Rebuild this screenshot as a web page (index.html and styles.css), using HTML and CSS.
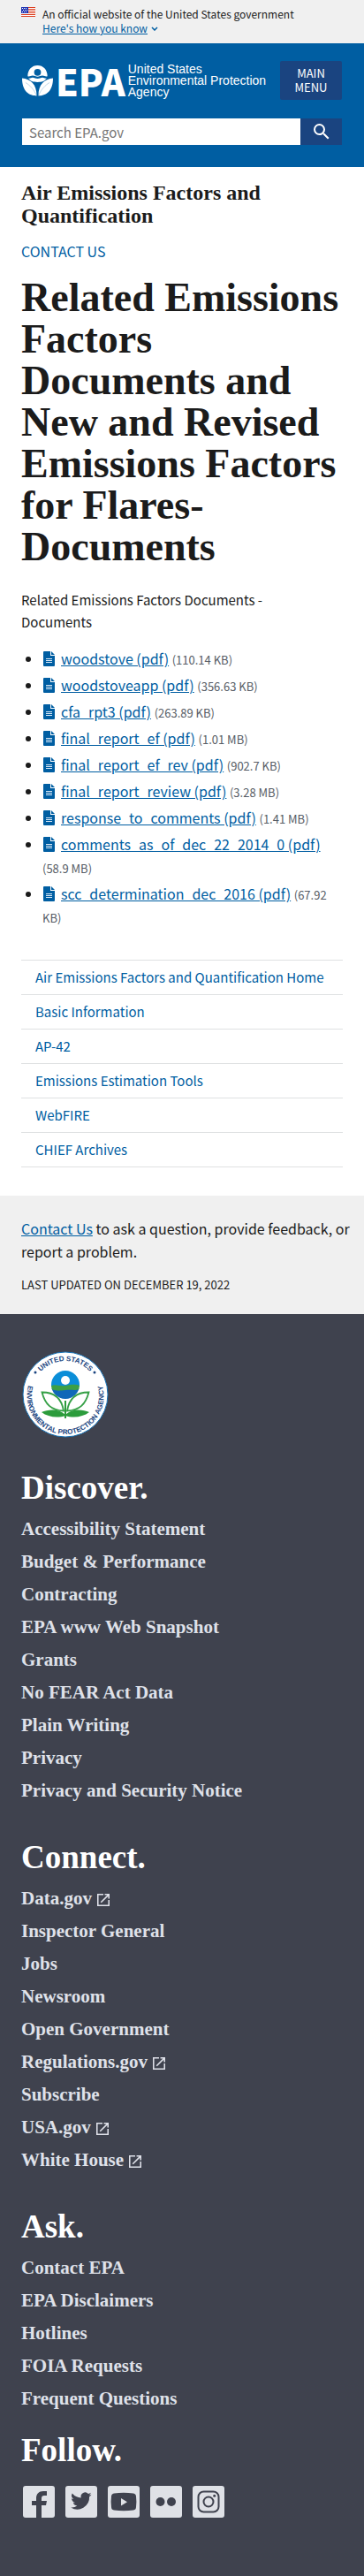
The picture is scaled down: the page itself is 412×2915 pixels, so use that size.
FILE: index.html
```html
<!DOCTYPE html>
<html lang="en">
<head>
<meta charset="utf-8">
<meta name="viewport" content="width=device-width, initial-scale=1">
<title>Related Emissions Factors Documents | US EPA</title>
<link rel="stylesheet" href="styles.css">
</head>
<body>
<svg class="defs" aria-hidden="true">
  <symbol id="file" viewBox="0 0 13 17"><path fill="#005ea2" d="M1 0h7v5h5v11a1 1 0 0 1-1 1H1a1 1 0 0 1-1-1V1a1 1 0 0 1 1-1z"/><path fill="#005ea2" d="M9 0l4 4H9z"/><path stroke="#d9e8f6" stroke-width="1" d="M3 8.500h7M3 10.500h7M3 12.500h7"/></symbol>
  <symbol id="launch" viewBox="3 3 18 18"><path fill="currentColor" d="M19 19H5V5h7V3H3v18h18v-9h-2v7zM14 3v2h3.590l-9.830 9.830 1.410 1.410L19 6.410V10h2V3h-7z"/></symbol>
</svg>

<section class="banner" aria-label="Official government website">
  <svg class="flag" viewBox="0 0 16 11" aria-hidden="true">
    <path fill="#fff" d="M0 0h16v11H0z"/>
    <path fill="#db3e1f" d="M0 0h16v1H0zM0 2h16v1H0zM0 4h16v1H0zM0 6h16v1H0zM0 8h16v1H0zM0 10h16v1H0z"/>
    <path fill="#1e33b1" d="M0 0h8v7H0z"/>
    <path stroke="#fff" stroke-dasharray="1 1" d="M1 1.500h6M2 3.500h5M1 5.500h6"/>
  </svg>
  <div>
    <p>An official website of the United States government</p>
    <button class="banner-toggle" type="button"><span>Here's how you know</span><svg viewBox="0 0 8 5" aria-hidden="true"><path d="M1 1l3 3 3-3" fill="none" stroke="currentColor" stroke-width="1.500"/></svg></button>
  </div>
</section>

<header class="header">
  <div class="header-top">
    <a class="logo" href="#" aria-label="EPA home">
      <svg class="flower" viewBox="0 0 36 36" aria-hidden="true">
        <path fill="#fff" fill-rule="evenodd" d="M6.500 12.500C6.500 5 11.500 0 18 0s11.500 5 11.500 12.500c-2 1-3.500-.6-5.700-.6-2.500 0-3.600 1.200-5.800 1.200s-3.300-1.200-5.800-1.200c-2.200 0-3.700 1.600-5.700.6zM18 4a4 4 0 1 0 0 8 4 4 0 0 0 0-8z"/>
        <path fill="#fff" d="M7.500 15c2.200.4 3-.8 4.700-.8 2.300 0 3.500 1.300 5.800 1.300s3.500-1.300 5.800-1.300c1.700 0 2.500 1.200 4.700.8-2 3.500-5.500 4.500-10.500 4.500S9.500 18.500 7.500 15z"/>
        <path fill="#fff" d="M0 15c10 1 17 7 17 20.500C8 35.500 0 30 0 15zM36 15c-10 1-17 7-17 20.500 9 0 17-5.500 17-20.500z"/>
        <path stroke="#005ea2" stroke-width="1" fill="none" d="M4 20c5 3 10 8 13 15.500M32 20c-5 3-10 8-13 15.500" opacity=".25"/>
      </svg>
      <span class="wordmark">EPA</span>
      <span class="agency">United States<br>Environmental Protection<br>Agency</span>
    </a>
    <button class="menu" type="button">MAIN MENU</button>
  </div>
  <form class="search" role="search">
    <input type="search" aria-label="Search EPA.gov" placeholder="Search EPA.gov">
    <button type="button" aria-label="Search"><svg viewBox="3 3 18 18" aria-hidden="true"><path fill="#fff" d="M15.500 14h-.79l-.28-.27A6.470 6.470 0 0 0 16 9.500 6.500 6.500 0 1 0 9.500 16c1.610 0 3.090-.59 4.230-1.570l.27.28v.79l5 4.990L20.490 19l-4.990-5zm-6 0C7.010 14 5 11.990 5 9.500S7.010 5 9.500 5 14 7.010 14 9.500 11.990 14 9.500 14z"/></svg></button>
  </form>
</header>

<main class="main">
  <h2 class="area">Air Emissions Factors and Quantification</h2>
  <a class="contact" href="#">CONTACT US</a>
  <h1>Related Emissions Factors<br>Documents and<br>New and Revised Emissions Factors for Flares-<wbr>Documents</h1>
  <p class="intro">Related Emissions Factors Documents -<br>Documents</p>
  <ul class="files">
    <li><svg><use href="#file"/></svg><a href="#">woodstove (pdf)</a> <small>(110.14 KB)</small></li>
    <li><svg><use href="#file"/></svg><a href="#">woodstoveapp (pdf)</a> <small>(356.63 KB)</small></li>
    <li><svg><use href="#file"/></svg><a href="#">cfa_rpt3 (pdf)</a> <small>(263.89 KB)</small></li>
    <li><svg><use href="#file"/></svg><a href="#">final_report_ef (pdf)</a> <small>(1.01 MB)</small></li>
    <li><svg><use href="#file"/></svg><a href="#">final_report_ef_rev (pdf)</a> <small>(902.7 KB)</small></li>
    <li><svg><use href="#file"/></svg><a href="#">final_report_review (pdf)</a> <small>(3.28 MB)</small></li>
    <li><svg><use href="#file"/></svg><a href="#">response_to_comments (pdf)</a> <small>(1.41 MB)</small></li>
    <li><svg><use href="#file"/></svg><a href="#">comments_as_of_dec_22_2014_0 (pdf)</a> <small>(58.9 MB)</small></li>
    <li><svg><use href="#file"/></svg><a href="#">scc_determination_dec_2016 (pdf)</a> <small>(67.92 KB)</small></li>
  </ul>
  <nav class="sidenav" aria-label="Section">
    <a href="#">Air Emissions Factors and Quantification Home</a>
    <a href="#">Basic Information</a>
    <a href="#">AP-42</a>
    <a href="#">Emissions Estimation Tools</a>
    <a href="#">WebFIRE</a>
    <a href="#">CHIEF Archives</a>
  </nav>
</main>

<section class="feedback">
  <p><a href="#">Contact Us</a> to ask a question, provide feedback, or report a problem.</p>
  <p class="updated">LAST UPDATED ON DECEMBER 19, 2022</p>
</section>

<footer class="footer">
  <svg class="seal" viewBox="0 0 98 98" role="img" aria-label="United States Environmental Protection Agency seal">
    <defs>
      <path id="arc-top" d="M11 49a38 38 0 0 1 76 0"/>
      <path id="arc-bottom" d="M20.700 17.500a43.500 43.500 0 1 0 56.600 0"/>
      <clipPath id="globe"><circle cx="49" cy="38" r="16"/></clipPath>
    </defs>
    <circle cx="49" cy="49" r="48" fill="#fff" stroke="#1470b5" stroke-width="1"/>
    <g class="seal-text">
      <text text-anchor="middle"><textPath href="#arc-top" startOffset="50%">UNITED STATES</textPath></text>
      <text text-anchor="middle"><textPath href="#arc-bottom" startOffset="50%">ENVIRONMENTAL PROTECTION AGENCY</textPath></text>
    </g>
    <circle cx="15" cy="24" r="1.500" fill="#1a4480"/><circle cx="82" cy="24" r="1.500" fill="#1a4480"/>
    <g clip-path="url(#globe)">
      <path fill="#0b8ed8" d="M33 22h32v18H33z"/>
      <path fill="#0f67b8" d="M33 42h32v13H33z"/>
      <path fill="#3c9f45" d="M33 39c6-2 9 1 16 0s10-2 16 0v4c-6 2-9 0-16 1s-10 1-16-1z"/>
    </g>
    <circle cx="49" cy="33" r="5" fill="#fff"/>
    <path fill="#fff" stroke="#35a046" stroke-width="1.800" d="M22.500 46.500c12 0 22 5 24.500 21C33 67 26 60 22.500 46.500zM75.500 46.500c-12 0-22 5-24.500 21C65 67 72 60 75.500 46.500z"/>
    <path fill="#2c9c3c" d="M22 69c8-3.500 20-4 27 3 7-7 19-6.500 27-3-7 5.500-18 7-27 4-9 3-20 1.500-27-4zM48 56h2v20h-2z"/>
  </svg>

  <section>
    <h2>Discover.</h2>
    <ul>
      <li><a href="#">Accessibility Statement</a></li>
      <li><a href="#">Budget &amp; Performance</a></li>
      <li><a href="#">Contracting</a></li>
      <li><a href="#">EPA www Web Snapshot</a></li>
      <li><a href="#">Grants</a></li>
      <li><a href="#">No FEAR Act Data</a></li>
      <li><a href="#">Plain Writing</a></li>
      <li><a href="#">Privacy</a></li>
      <li><a href="#">Privacy and Security Notice</a></li>
    </ul>
  </section>
  <section>
    <h2>Connect.</h2>
    <ul>
      <li><a href="#">Data.gov<svg><use href="#launch"/></svg></a></li>
      <li><a href="#">Inspector General</a></li>
      <li><a href="#">Jobs</a></li>
      <li><a href="#">Newsroom</a></li>
      <li><a href="#">Open Government</a></li>
      <li><a href="#">Regulations.gov<svg><use href="#launch"/></svg></a></li>
      <li><a href="#">Subscribe</a></li>
      <li><a href="#">USA.gov<svg><use href="#launch"/></svg></a></li>
      <li><a href="#">White House<svg><use href="#launch"/></svg></a></li>
    </ul>
  </section>
  <section>
    <h2>Ask.</h2>
    <ul>
      <li><a href="#">Contact EPA</a></li>
      <li><a href="#">EPA Disclaimers</a></li>
      <li><a href="#">Hotlines</a></li>
      <li><a href="#">FOIA Requests</a></li>
      <li><a href="#">Frequent Questions</a></li>
    </ul>
  </section>
  <section class="follow">
    <h2>Follow.</h2>
    <div class="social">
      <a href="#" aria-label="Facebook"><svg viewBox="0 0 36 36"><path d="M15 36V22H10v-5h5v-3c0-5 3-8 8-8h4v5h-3c-2 0-3 1-3 3v3h6l-1 5h-5v14z"/></svg></a>
      <a href="#" aria-label="Twitter"><svg viewBox="0 0 36 36"><path d="M29.500 9.700a10 10 0 0 1-2.700.8 4.800 4.800 0 0 0 2.100-2.700 9.500 9.500 0 0 1-3 1.200 4.800 4.800 0 0 0-8.200 4.400A13.600 13.600 0 0 1 7.800 8.400a4.800 4.800 0 0 0 1.500 6.400 4.700 4.700 0 0 1-2.200-.6c0 2.300 1.600 4.300 3.900 4.800a4.800 4.800 0 0 1-2.200.1 4.800 4.800 0 0 0 4.500 3.300A9.600 9.600 0 0 1 6.200 24.400 13.600 13.600 0 0 0 27.100 12.300a9.700 9.700 0 0 0 2.400-2.600z"/></svg></a>
      <a href="#" aria-label="YouTube"><svg viewBox="0 0 36 36"><path fill-rule="evenodd" d="M7 8.500Q18 7 29 8.500q3 .5 3 3.500.8 6 0 12 0 3-3 3.500-11 1.500-22 0-3-.5-3-3.500-.8-6 0-12 0-3 3-3.500zM15 14v8.500l7-4.200z"/></svg></a>
      <a href="#" aria-label="Flickr"><svg viewBox="0 0 36 36"><circle cx="11.500" cy="18" r="5"/><circle cx="24" cy="18" r="5"/></svg></a>
      <a href="#" aria-label="Instagram"><svg viewBox="0 0 36 36"><rect x="6.500" y="6.500" width="23" height="23" rx="6" fill="none" stroke="#3f424e" stroke-width="2"/><circle cx="18" cy="18" r="5.500" fill="none" stroke="#3f424e" stroke-width="2"/><circle cx="24.700" cy="11.300" r="1.500"/></svg></a>
    </div>
  </section>
</footer>
</body>
</html>
```

FILE: styles.css
```css
* { box-sizing: border-box; }

body {
  margin: 0;
  color: #1b1b1b;
  background: #fff;
  font: 15px/25px "Noto Sans CJK SC", "Noto Sans", sans-serif;
}

h1, h2, p, ul { margin: 0; }
ul { padding: 0; }
a { color: #005ea2; }
button, input { font-family: inherit; }
.defs { position: absolute; width: 0; height: 0; }

/* Government banner */
.banner {
  display: flex;
  gap: 8px;
  padding: 7px 24px 9px;
  background: #f0f0f0;
  font-size: 12px;
  line-height: 17px;
}
.flag { flex: none; width: 16px; height: 11px; margin-top: 1px; }
.banner-toggle {
  display: flex;
  align-items: center;
  gap: 4px;
  padding: 0;
  border: 0;
  background: none;
  color: #005ea2;
  font-size: 12px;
  line-height: 16px;
}
.banner-toggle span { text-decoration: underline; }
.banner-toggle svg { width: 8px; height: 5px; }

/* Header */
.header { padding: 20px 25px 25px; background: #005ea2; }
.header-top { display: flex; align-items: center; justify-content: space-between; }
.logo {
  display: flex;
  align-items: center;
  gap: 3px;
  color: #fff;
  text-decoration: none;
}
.flower { width: 35px; height: 35px; }
.wordmark { font-size: 41px; font-weight: 900; line-height: 36px; }
.agency { font: 14px/13px "Liberation Sans", sans-serif; white-space: nowrap; }
.menu {
  width: 70px;
  padding: 6px 8px;
  border: 0;
  border-radius: 2px;
  background: #1a4480;
  color: #fff;
  font-size: 13px;
  line-height: 16px;
}
.search { display: flex; margin-top: 21px; }
.search input {
  flex: 1;
  min-width: 0;
  height: 30px;
  padding: 0 8px;
  border: 0;
  border-radius: 0;
  background: #fff;
  color: #1b1b1b;
  font-size: 15px;
}
.search input::placeholder { color: #757575; }
.search button {
  display: grid;
  place-items: center;
  width: 47px;
  padding: 0;
  border: 0;
  background: #1a4480;
}
.search svg { width: 18px; height: 18px; }

/* Main content */
.main { padding: 16px 24px 32px; }
.area, h1, .footer { font-family: "Liberation Serif", serif; font-weight: 700; }
.area { font-size: 24px; line-height: 26px; }
.contact { display: block; margin-top: 15px; font-size: 16px; text-decoration: none; }
h1 { margin-top: 16px; font-size: 46px; line-height: 47px; }
.intro { margin-top: 24px; }
.files { margin-top: 16px; padding-left: 24px; font-size: 16px; }
.files li { margin-bottom: 4px; line-height: 26px; }
.files svg { width: 13px; height: 17px; margin: 0 7px 0 1px; vertical-align: -2px; }
.files small { color: #565c65; font-size: 13px; line-height: 20px; }
.sidenav { margin-top: 36px; border-top: 1px solid #dfe1e2; }
.sidenav a {
  display: block;
  padding: 6px 16px 7px;
  border-bottom: 1px solid #dfe1e2;
  text-decoration: none;
}

/* Feedback */
.feedback { padding: 24px 16px 20px 24px; background: #f0f0f0; font-size: 16px; line-height: 26px; }
.updated { margin-top: 12px; font-size: 13px; }

/* Footer */
.footer { padding: 42px 24px 66px; background: #3f424e; }
.seal { display: block; width: 98px; height: 98px; margin-left: 1px; }
.seal-text { fill: #1a4480; font: 700 8px "Liberation Sans", sans-serif; }
.footer section { padding-top: 37px; }
.footer h2 { color: #fff; font-size: 37px; line-height: 40px; }
.footer ul { list-style: none; padding-top: 8px; }
.footer li { padding: 6px 0 7px; font-size: 21px; line-height: 24px; }
.footer li a { color: #dfe1e9; text-decoration: none; }
.footer li svg { width: 14px; height: 14px; margin-left: 6px; vertical-align: -2px; }
.footer .follow { padding-top: 20px; }
.social { display: flex; gap: 12px; padding: 20px 2px 0; }
.social a { width: 36px; height: 36px; border-radius: 3px; background: #dfe1e6; }
.social svg { display: block; fill: #3f424e; }
```
